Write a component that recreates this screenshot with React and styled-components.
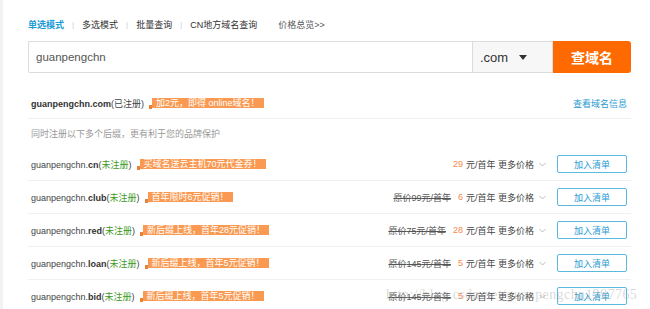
import React from 'react'
import styled, { createGlobalStyle } from 'styled-components'

const GlobalStyle = createGlobalStyle`
  body {
    margin: 0;
    background: #fff;
    font-family: "Liberation Sans", "Noto Sans CJK SC", sans-serif;
  }
`

const tabs = ['单选模式', '多选模式', '批量查询', 'CN地方域名查询']

const suffixes = [
  { ext: 'cn', tag: '买域名送云主机70元代金券！', price: 29 },
  { ext: 'club', tag: '首年限时6元促销！', origin: 99, price: 6 },
  { ext: 'red', tag: '新后缀上线，首年28元促销！', origin: 75, price: 28 },
  { ext: 'loan', tag: '新后缀上线，首年5元促销！', origin: 145, price: 5 },
  { ext: 'bid', tag: '新后缀上线，首年5元促销！', origin: 145, price: 5 },
]

const Chevron = () => (
  <svg width="7" height="5" viewBox="0 0 7 5">
    <path d="M0.5 1 L3.5 4 L6.5 1" fill="none" stroke="#b5b5b5" strokeWidth="0.9" />
  </svg>
)

const Caret = () => (
  <svg width="8" height="5" viewBox="0 0 8 5">
    <path d="M0 0 H8 L4 5 Z" fill="#333" />
  </svg>
)

const App = () => {
  return (
    <Page>
      <GlobalStyle />

      {/* mode tabs */}
      <Tabs>
        {tabs.map((t, i) => (
          <React.Fragment key={t}>
            <Tab active={i === 0}>{t}</Tab>
            {i < tabs.length - 1 && <Sep>|</Sep>}
          </React.Fragment>
        ))}
        <Overview>价格总览&gt;&gt;</Overview>
      </Tabs>

      {/* search bar */}
      <SearchBar>
        <Input>guanpengchn</Input>
        <Select>
          <span>.com</span>
          <Caret />
        </Select>
        <SearchButton>查域名</SearchButton>
      </SearchBar>

      {/* registered result */}
      <Row height="30px">
        <Name>
          <b>guanpengchn.com</b>(已注册)
        </Name>
        <Tag>加2元，即得 online域名！</Tag>
        <InfoLink>查看域名信息</InfoLink>
      </Row>

      <Hint>同时注册以下多个后缀，更有利于您的品牌保护</Hint>

      {suffixes.map((s) => (
        <Row key={s.ext} height="32px">
          <Name>
            guanpengchn.<b>{s.ext}</b>(<Free>未注册</Free>)
          </Name>
          <Tag>{s.tag}</Tag>
          <Price>
            {s.origin && <Origin>原价{s.origin}元/首年</Origin>}
            <Amount>{s.price}</Amount>
            <span>元/首年 更多价格</span>
            <Chevron />
          </Price>
          <AddButton>加入清单</AddButton>
        </Row>
      ))}

      <Watermark>http://blog.csdn.net/guanpengchn1997765</Watermark>
    </Page>
  )
}

const Page = styled.div`
  position: relative;
  height: 309px;
  overflow: hidden;
  box-sizing: border-box;
  border-left: 3px solid #f2f2f2;
  padding: 16px 19px 0 25px;
  font-size: 9px;
  color: #333;
`

const Tabs = styled.div`
  display: flex;
  align-items: center;
  height: 16px;
  font-size: 9px;
`

const Tab = styled.span`
  color: ${(p) => (p.active ? '#1a9bd7' : '#333')};
  font-weight: ${(p) => (p.active ? 'bold' : 'normal')};
`

const Sep = styled.span`
  color: #ccc;
  margin: 0 8px;
  font-size: 8px;
`

const Overview = styled.span`
  margin-left: 21px;
  color: #555;
`

const SearchBar = styled.div`
  display: flex;
  height: 32px;
  margin-top: 9px;
`

const Input = styled.div`
  flex: 1;
  display: flex;
  align-items: center;
  box-sizing: border-box;
  padding-left: 7px;
  border: 1px solid #dcdcdc;
  border-right: none;
  border-radius: 2px 0 0 2px;
  font-size: 11.5px;
  color: #555;
`

const Select = styled.div`
  width: 81px;
  display: flex;
  align-items: center;
  gap: 11px;
  box-sizing: border-box;
  padding-left: 7px;
  border: 1px solid #dcdcdc;
  background: #f7f7f7;
  font-size: 13px;
  color: #333;
`

const SearchButton = styled.div`
  width: 78px;
  display: flex;
  align-items: center;
  justify-content: center;
  background: #ff6a00;
  border-radius: 0 3px 3px 0;
  color: #fff;
  font-size: 14px;
  font-weight: bold;
`

const Row = styled.div`
  display: flex;
  align-items: center;
  height: ${(p) => p.height};
  padding: 0 4px 0 3px;
  border-bottom: 1px solid #f1f1f1;
  margin-top: ${(p) => (p.height === '30px' ? '15px' : '0')};
`

const Name = styled.span`
  color: #444;
  white-space: nowrap;
  b {
    color: #333;
  }
`

const Free = styled.span`
  color: #3c9a1e;
`

const Tag = styled.span`
  position: relative;
  margin-left: 8px;
  padding: 0 4px;
  height: 10px;
  line-height: 10px;
  background: #fa9a52;
  color: #fff;
  white-space: nowrap;

  &::before {
    content: '';
    position: absolute;
    left: -3px;
    bottom: -1px;
    width: 3px;
    height: 4px;
    background: #e8813a;
  }
`

const InfoLink = styled.span`
  margin-left: auto;
  color: #2a9bd3;
`

const Hint = styled.div`
  display: flex;
  align-items: center;
  height: 29px;
  padding-left: 3px;
  color: #999;
`

const Price = styled.span`
  margin-left: auto;
  display: flex;
  align-items: center;
  color: #444;
  white-space: nowrap;

  svg {
    margin-left: 5px;
  }
`

const Origin = styled.span`
  text-decoration: line-through;
  color: #555;
  margin-right: 7px;
`

const Amount = styled.span`
  color: #f7894a;
  margin-right: 3px;
`

const AddButton = styled.span`
  margin-left: 11px;
  width: 70px;
  height: 18px;
  box-sizing: border-box;
  display: flex;
  align-items: center;
  justify-content: center;
  border: 1px solid #5ab9dc;
  border-radius: 2px;
  color: #2a9bd3;
`

const Watermark = styled.div`
  position: absolute;
  left: 383px;
  top: 287px;
  font-family: "Liberation Serif", serif;
  font-size: 14px;
  letter-spacing: 0.4px;
  color: rgba(170, 170, 170, 0.45);
  white-space: nowrap;
  pointer-events: none;
`

export default App
